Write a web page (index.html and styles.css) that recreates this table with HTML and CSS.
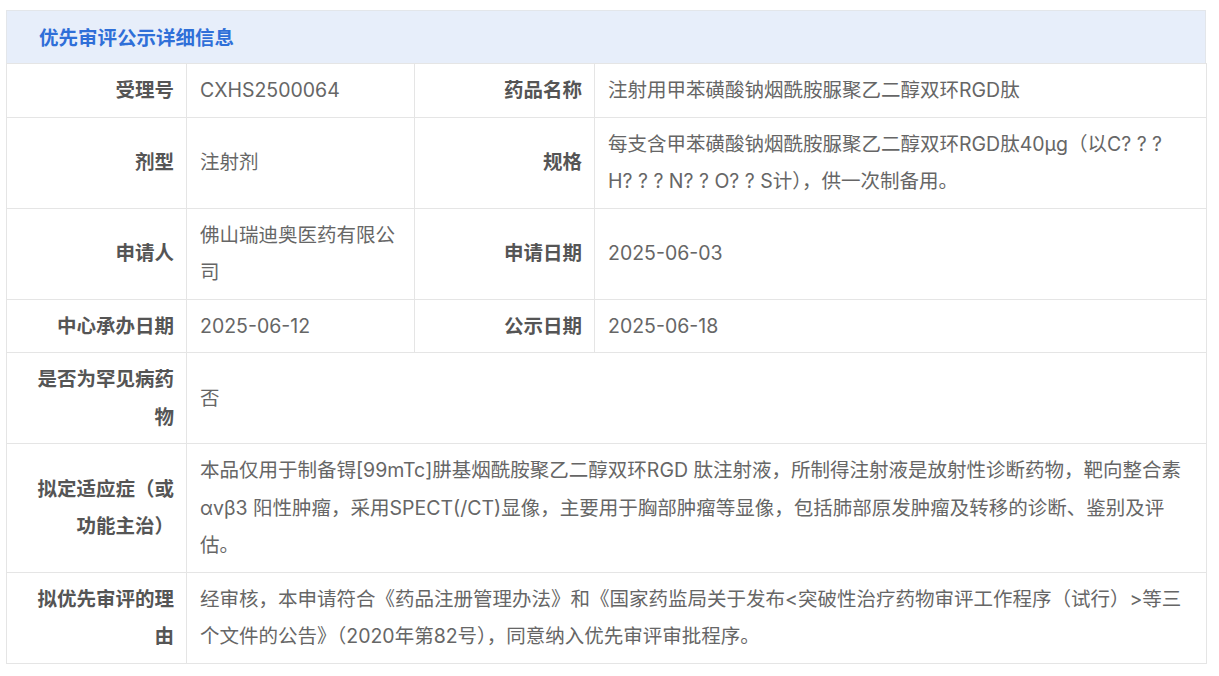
FILE: index.html
```html
<!DOCTYPE html>
<html lang="zh-CN">
<head>
<meta charset="utf-8">
<title>优先审评公示详细信息</title>
<link rel="stylesheet" href="styles.css">
</head>
<body>
<div class="panel">
  <div class="panel-head">优先审评公示详细信息</div>
  <table class="detail">
    <colgroup>
      <col class="c-label">
      <col class="c-value">
      <col class="c-label">
      <col class="c-wide">
    </colgroup>
    <tr>
      <th>受理号</th>
      <td>CXHS2500064</td>
      <th>药品名称</th>
      <td>注射用甲苯磺酸钠烟酰胺脲聚乙二醇双环RGD肽</td>
    </tr>
    <tr>
      <th>剂型</th>
      <td>注射剂</td>
      <th>规格</th>
      <td>每支含甲苯磺酸钠烟酰胺脲聚乙二醇双环RGD肽40μg（以C? ? ? H? ? ? N? ? O? ? S计），供一次制备用。</td>
    </tr>
    <tr>
      <th>申请人</th>
      <td>佛山瑞迪奥医药有限公司</td>
      <th>申请日期</th>
      <td>2025-06-03</td>
    </tr>
    <tr>
      <th>中心承办日期</th>
      <td>2025-06-12</td>
      <th>公示日期</th>
      <td>2025-06-18</td>
    </tr>
    <tr>
      <th>是否为罕见病药物</th>
      <td colspan="3">否</td>
    </tr>
    <tr>
      <th>拟定适应症（或功能主治）</th>
      <td colspan="3">本品仅用于制备锝[99mTc]肼基烟酰胺聚乙二醇双环RGD 肽注射液，所制得注射液是放射性诊断药物，靶向整合素αvβ3 阳性肿瘤，采用SPECT(/CT)显像，主要用于胸部肿瘤等显像，包括肺部原发肿瘤及转移的诊断、鉴别及评估。</td>
    </tr>
    <tr>
      <th>拟优先审评的理由</th>
      <td colspan="3">经审核，本申请符合《药品注册管理办法》和《国家药监局关于发布&lt;突破性治疗药物审评工作程序（试行）&gt;等三个文件的公告》（2020年第82号），同意纳入优先审评审批程序。</td>
    </tr>
  </table>
</div>
</body>
</html>
```

FILE: styles.css
```css
html, body {
  margin: 0;
  padding: 0;
  background: #ffffff;
}

body {
  font-family: "Inter", "Noto Sans CJK SC", sans-serif;
}

.panel {
  width: 1200px;
  margin: 10px 0 0 6px;
}

.panel-head {
  box-sizing: border-box;
  height: 53px;
  padding-left: 32px;
  background: #e7eefa;
  border: 1px solid #e3e6ea;
  border-bottom: none;
  color: #2f6fd8;
  font-family: "Noto Sans CJK SC", sans-serif;
  font-size: 19.5px;
  font-weight: bold;
  line-height: 52px;
}

.detail {
  width: 1200px;
  border-collapse: collapse;
  table-layout: fixed;
  font-size: 19.5px;
  line-height: 37.5px;
}

.c-label { width: 180px; }
.c-value { width: 228px; }
.c-wide { width: 612px; }

.detail th,
.detail td {
  border: 1px solid #e5e5e5;
  vertical-align: middle;
}

.detail th {
  text-align: right;
  color: #555555;
  font-weight: bold;
  padding: 8px 12px 7px 20px;
}

.detail td {
  text-align: left;
  color: #666666;
  font-weight: normal;
  padding: 8px 14px 7px 13px;
}
```
